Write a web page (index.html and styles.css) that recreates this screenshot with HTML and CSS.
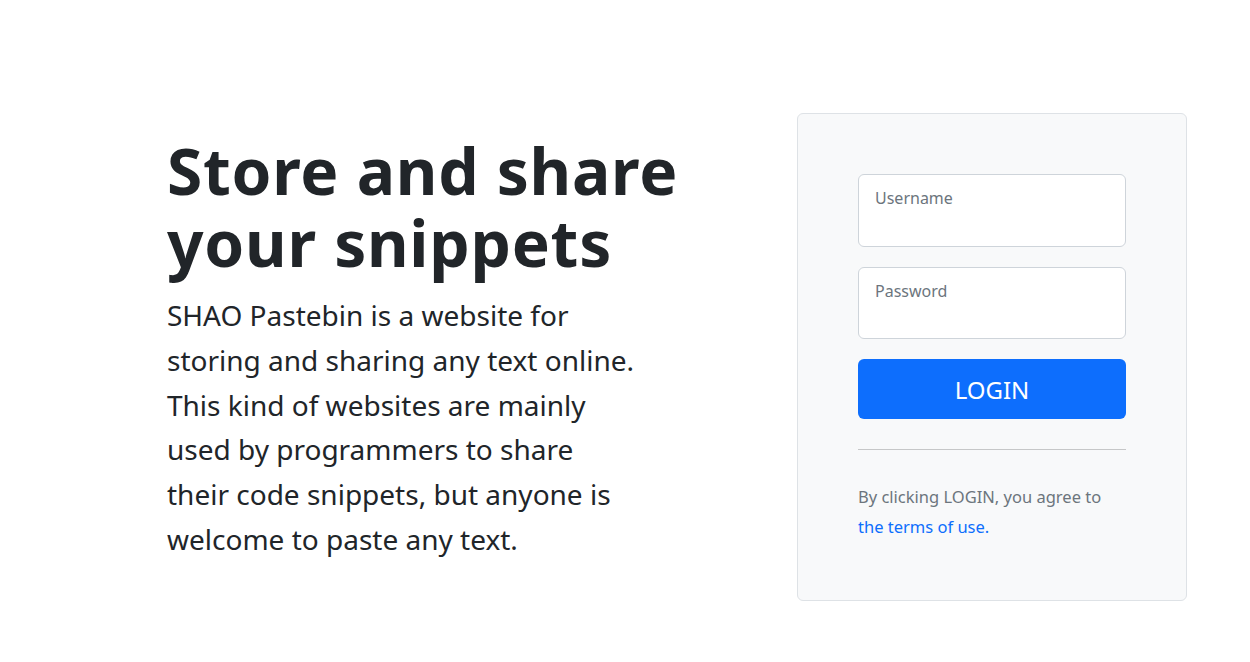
FILE: index.html
```html
<!DOCTYPE html>
<html lang="en">
<head>
<meta charset="utf-8">
<title>SHAO Pastebin</title>
<link rel="stylesheet" href="styles.css">
</head>
<body>
<main class="hero">
  <section class="intro">
    <h1 class="title">Store and share<br>your snippets</h1>
    <p class="lead">SHAO Pastebin is a website for<br>storing and sharing any text online.<br>This kind of websites are mainly<br>used by programmers to share<br>their code snippets, but anyone is<br>welcome to paste any text.</p>
  </section>
  <form class="card">
    <div class="field">
      <input class="field-input" type="text" id="username">
      <label class="field-label" for="username">Username</label>
    </div>
    <div class="field">
      <input class="field-input" type="password" id="password">
      <label class="field-label" for="password">Password</label>
    </div>
    <button class="btn-login" type="button">LOGIN</button>
    <hr class="divider">
    <p class="terms">By clicking LOGIN, you agree to<br><a class="terms-link" href="#">the terms of use.</a></p>
  </form>
</main>
</body>
</html>
```

FILE: styles.css
```css
* { box-sizing: border-box; }
html, body { margin: 0; padding: 0; background: #fff; }
body {
  font-family: "Noto Sans", "Open Sans", sans-serif;
  color: #212529;
  width: 1250px;
  height: 662px;
  overflow: hidden;
}
.hero {
  display: grid;
  grid-template-columns: 630px 390px;
  padding: 113px 0 0 167px;
  align-items: start;
}
.intro {
  margin-top: 22px;
}
.title {
  margin: 0;
  font-size: 64px;
  line-height: 72px;
  font-weight: 700;
  letter-spacing: 0.75px;
  color: #212529;
}
.lead {
  margin: 14px 0 0;
  font-size: 28px;
  line-height: 44.8px;
  font-weight: 400;
  color: #212529;
}
.card {
  display: flex;
  flex-direction: column;
  background: #f8f9fa;
  border: 1px solid #dee2e6;
  border-radius: 6px;
  padding: 60px 60px 58px;
  margin: 0;
}
.field {
  position: relative;
  margin-bottom: 20px;
}
.field-input {
  display: block;
  width: 100%;
  height: 72.5px;
  border: 1px solid #ced4da;
  border-radius: 6px;
  background: #fff;
  padding: 30px 16px 10px;
  font-family: inherit;
  font-size: 16px;
  outline: none;
}
.field-label {
  position: absolute;
  top: 12px;
  left: 17px;
  font-size: 16px;
  line-height: 24px;
  color: #6c757d;
  pointer-events: none;
}
.btn-login {
  height: 60px;
  border: 0;
  border-radius: 6px;
  background: #0d6efd;
  color: #fff;
  font-family: inherit;
  font-size: 24px;
  cursor: pointer;
}
.divider {
  margin: 30px 0 32px;
  border: 0;
  border-top: 1px solid #c6c7c8;
  height: 0;
}
.terms {
  margin: 0;
  font-size: 16.5px;
  line-height: 30px;
  color: #6c757d;
}
.terms-link {
  color: #0d6efd;
  text-decoration: none;
}
```
